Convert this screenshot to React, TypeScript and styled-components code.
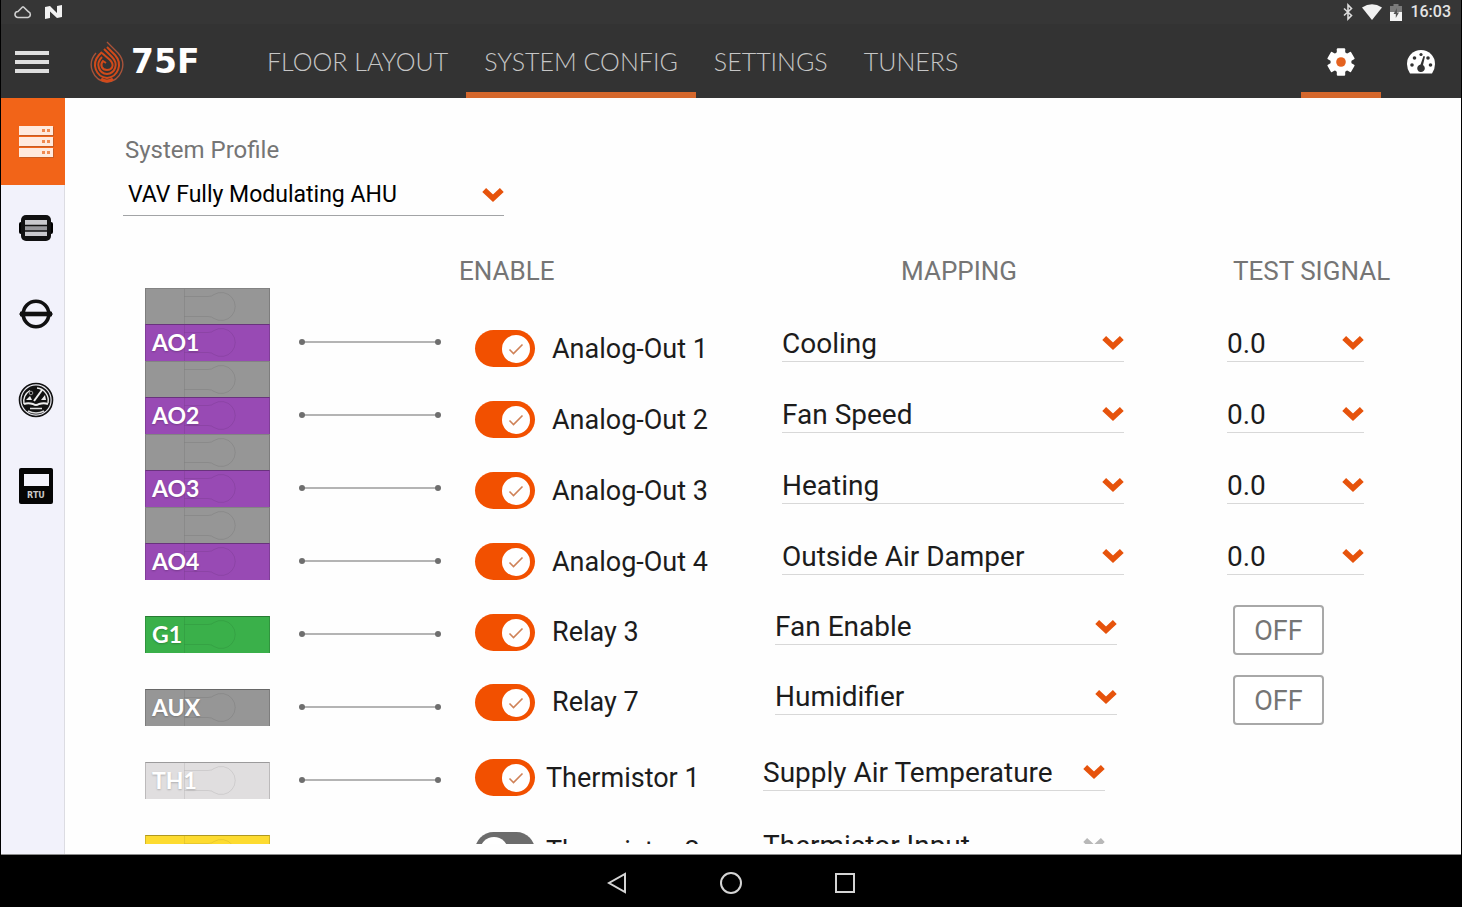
import React, { useState } from "react";
import styled, { createGlobalStyle, css } from "styled-components";

const colors = {
  bar: "#333333",
  accent: "#f26418",
  toggle: "#f25000",
  chevron: "#e6530c",
  rail: "#f2f2fb",
  muted: "#757575",
  ink: "#1c1c1c",
};

const GlobalStyle = createGlobalStyle`
  *, *::before, *::after { box-sizing: border-box; }
  body { margin: 0; background: #000; }
  button, select, input { font: inherit; color: inherit; margin: 0; }
`;

const Screen = styled.div`
  display: flex;
  flex-direction: column;
  height: 100vh;
  padding: 0 1px;
  background: #000;
  color: ${colors.ink};
  font-family: Roboto, "Liberation Sans", sans-serif;
`;

/* ---------- status bar ---------- */

const StatusBar = styled.div`
  display: flex;
  align-items: center;
  justify-content: space-between;
  height: 24px;
  padding: 0 10px 0 13px;
  background: #363636;
  color: #e4e4e4;
`;

const StatusGroup = styled.div<{ $gap: number }>`
  display: flex;
  align-items: center;
  gap: ${(p) => p.$gap}px;
`;

const Clock = styled.time`
  font-size: 16px;
  line-height: 24px;
  font-weight: 500;
`;

/* ---------- app bar ---------- */

const AppBar = styled.header`
  display: flex;
  align-items: stretch;
  height: 74px;
  flex: none;
  background: ${colors.bar};
`;

const MenuButton = styled.button`
  display: flex;
  align-items: center;
  width: 88px;
  padding: 2px 0 0 14px;
  border: 0;
  background: none;
  cursor: pointer;
`;

const Brand = styled.a`
  display: flex;
  align-items: center;
  gap: 6px;
  width: 160px;
  padding-top: 2px;
  color: #fff;
  font-family: "DejaVu Sans", sans-serif;
  font-size: 33px;
  line-height: 36px;
  font-weight: 700;
  text-decoration: none;
`;

const Tabs = styled.nav`
  display: flex;
  flex: 1;
`;

const Tab = styled.a<{ $active?: boolean }>`
  display: flex;
  align-items: center;
  padding: 12px 18px 6px;
  border-bottom: 6px solid ${(p) => (p.$active ? "#d4672c" : "transparent")};
  color: #c6c6c6;
  font-family: Lato, "Open Sans", sans-serif;
  font-size: 25px;
  line-height: 32px;
  font-weight: 300;
  text-decoration: none;
  white-space: nowrap;
`;

const IconTab = styled.button<{ $active?: boolean }>`
  display: flex;
  align-items: center;
  justify-content: center;
  width: 80px;
  padding: 14px 0 6px;
  border: 0;
  border-bottom: 6px solid ${(p) => (p.$active ? "#d4672c" : "transparent")};
  background: none;
  cursor: pointer;
`;

/* ---------- main area ---------- */

const Main = styled.div`
  display: flex;
  flex: 1;
  min-height: 0;
  background: #fefefe;
  border-bottom: 1px solid #8c8c8c;
`;

const Rail = styled.nav`
  width: 64px;
  flex: none;
  background: ${colors.rail};
  border-right: 1px solid #dcdce2;
`;

const RailButton = styled.button<{ $active?: boolean }>`
  display: flex;
  align-items: center;
  justify-content: center;
  width: 64px;
  height: ${(p) => (p.$active ? 87 : 86)}px;
  padding: 0 0 0 6px;
  border: 0;
  background: ${(p) => (p.$active ? colors.accent : "transparent")};
  cursor: pointer;
`;

const Content = styled.main`
  flex: 1;
  min-width: 0;
  margin-bottom: 10px;
  padding: 36px 0 0 58px;
  overflow: hidden;
`;

const ProfileField = styled.div`
  width: 381px;
`;

const ProfileLabel = styled.label`
  display: block;
  padding-left: 2px;
  color: ${colors.muted};
  font-size: 24px;
  line-height: 32px;
`;

const SelectBox = styled.div<{ $width?: number; $profile?: boolean }>`
  position: relative;
  width: ${(p) => (p.$width ? `${p.$width}px` : "100%")};
  height: 36px;
  border-bottom: 1px solid #d8d8d8;
  font-size: 28px;
  ${(p) =>
    p.$profile
      ? css`
          height: 42px;
          margin-top: 8px;
          padding-left: 5px;
          border-bottom-color: #a2a4a6;
          color: #000;
          font-size: 23px;
        `
      : css`
          margin-bottom: 10px;
        `}
`;

const NativeSelect = styled.select`
  appearance: none;
  display: block;
  width: 100%;
  height: 100%;
  padding: 0 32px 0 0;
  border: 0;
  border-radius: 0;
  background: none;
  cursor: pointer;
`;

const ChevronSlot = styled.span`
  position: absolute;
  top: 0;
  right: 0;
  bottom: 0;
  display: flex;
  align-items: center;
  pointer-events: none;
`;

const Board = styled.div`
  display: flex;
  align-items: flex-start;
  margin-top: 36px;
  padding-left: 22px;
`;

/* ---------- terminals ---------- */

const Terminals = styled.div`
  width: 314px;
  flex: none;
  padding-top: 36px;
`;

const TerminalRow = styled.div`
  display: flex;
  align-items: center;
  gap: 28px;
  height: 37px;
`;

const Tile = styled.div<{ $color: string; $spacer?: boolean }>`
  position: relative;
  display: flex;
  align-items: center;
  width: 125px;
  height: ${(p) => (p.$spacer ? 36 : 37)}px;
  padding: 0 0 2px 6px;
  border: solid rgba(0, 0, 0, 0.16);
  border-width: 1px 1px 0 1px;
  border-top-color: rgba(0, 0, 0, ${(p) => (p.$spacer ? 0.12 : 0.3)});
  background: ${(p) => p.$color};
  color: #fff;
  font-family: Lato, "Open Sans", sans-serif;
  font-size: 23px;
  line-height: 32px;
  font-weight: 700;
  text-shadow: 0 1px 2px rgba(0, 0, 0, 0.22);
`;

const Slot = styled.svg`
  position: absolute;
  inset: 0;
`;

const TileName = styled.span`
  position: relative;
`;

const Gap = styled.div`
  height: 36px;
`;

/* ---------- rows ---------- */

const Points = styled.div`
  flex: 1;
  min-width: 700px;
`;

const Heads = styled.div`
  display: grid;
  grid-template-columns: minmax(0, 1fr) 332px 160px;
  padding: 2px 68px 0 0;
  margin-bottom: 25px;
  color: ${colors.muted};
  font-size: 26px;
  line-height: 34px;
  white-space: nowrap;
`;

type Kind = "analog" | "relay" | "thermistor";

const signalWidth: Record<Kind, number> = { analog: 240, relay: 247, thermistor: 259 };
const rowHeight: Record<Kind, number> = { analog: 71, relay: 70, thermistor: 73 };

const PointRow = styled.div<{ $kind: Kind }>`
  display: grid;
  grid-template-columns: minmax(0, 1fr) 342px ${(p) => signalWidth[p.$kind]}px;
  align-items: center;
  height: ${(p) => rowHeight[p.$kind]}px;
  padding: 0 97px 0 16px;
`;

const ThermistorGroup = styled.div`
  padding-top: 4px;
`;

const ToggleLabel = styled.label<{ $kind: Kind }>`
  display: flex;
  align-items: center;
  gap: ${(p) => (p.$kind === "thermistor" ? 11 : 17)}px;
  font-size: 27px;
  line-height: 36px;
  white-space: nowrap;
  cursor: pointer;
`;

const Switch = styled.span`
  position: relative;
  display: flex;
  width: 60px;
  height: 37px;
`;

const SwitchInput = styled.input`
  appearance: none;
  width: 60px;
  height: 37px;
  border-radius: 19px;
  background: #6c6c6c;
  cursor: pointer;
  &:checked {
    background: ${colors.toggle};
  }
`;

const Knob = styled.span<{ $on: boolean }>`
  position: absolute;
  top: 5px;
  left: ${(p) => (p.$on ? 27 : 5)}px;
  display: flex;
  align-items: center;
  justify-content: center;
  width: 28px;
  height: 28px;
  border-radius: 50%;
  background: #fff;
  pointer-events: none;
`;

const Signal = styled.div`
  justify-self: end;
`;

const OffButton = styled.button`
  display: block;
  width: 91px;
  height: 50px;
  margin: 0 40px 4px 0;
  padding: 2px 0 0;
  border: 2px solid #a8a8a8;
  border-radius: 4px;
  background: #fff;
  color: ${colors.muted};
  font-size: 27px;
  line-height: 32px;
  cursor: pointer;
`;

/* ---------- system navigation ---------- */

const NavBar = styled.footer`
  display: flex;
  align-items: center;
  justify-content: center;
  gap: 64px;
  flex: none;
  height: 52px;
  padding-top: 3px;
  background: #000;
`;

const NavButton = styled.button`
  display: flex;
  align-items: center;
  justify-content: center;
  width: 50px;
  height: 48px;
  padding: 0;
  border: 0;
  background: none;
  cursor: pointer;
`;

/* ---------- drawings ---------- */

const Chevron = ({ color = colors.chevron }: { color?: string }) => (
  <svg width="22" height="22" viewBox="0 0 22 22" fill="none" aria-hidden="true">
    <path d="M2.200 6 L11 14.200 L19.800 6" stroke={color} strokeWidth="5.600" />
  </svg>
);

const FlameLogo = () => (
  <svg width="36" height="44" viewBox="0 0 36 44" fill="none" stroke="#d24a1a" aria-hidden="true">
    <path d="M18 2 L29 13 C39 24 32 41 18 42 C4 41 -3 24 7 13" stroke="#a8533a" strokeWidth="1.4" />
    <path d="M18 7 L26 15 C34 24 29 37 18 38 C7 37 2 24 10 15 L13 12" strokeWidth="2" />
    <path d="M15 9 L23 17 C30 24 26 33.500 18 34 C10 33.500 6 24 13 17" strokeWidth="2" />
    <path d="M13 13 L21 20 C26 25 23 30 18 30 C13 30 10.500 25 14 21 L17 23" strokeWidth="2" />
    <path d="M12 39 Q18 43 24 39" strokeWidth="3" />
  </svg>
);

const GearIcon = () => (
  <svg width="28" height="28" viewBox="0 0 28 28" aria-hidden="true">
    <circle cx="14" cy="14" r="10.500" fill="#fff" />
    {[0, 60, 120, 180, 240, 300].map((a) => (
      <rect key={a} x="9.800" y="0.300" width="8.400" height="8" rx="1" fill="#fff" transform={`rotate(${a} 14 14)`} />
    ))}
    <circle cx="14" cy="14" r="4.800" fill="#e4621f" />
  </svg>
);

const GaugeIcon = () => (
  <svg width="28" height="24" viewBox="0 0 28 24" aria-hidden="true">
    <path d="M3 23.500 Q0 19 0 14 A14 14 0 0 1 28 14 Q28 19 25 23.500 Z" fill="#fff" />
    <g fill={colors.bar}>
      <circle cx="5" cy="15" r="1.800" />
      <circle cx="7.500" cy="8" r="1.800" />
      <circle cx="14" cy="4.500" r="1.600" />
      <circle cx="21" cy="8" r="1.800" />
      <circle cx="23.500" cy="15" r="1.800" />
      <path d="M16.500 6 L18 6.500 L16 15 A3.800 3.800 0 1 1 13.500 14.500 Z" />
    </g>
  </svg>
);

const ServerIcon = () => (
  <svg width="35" height="32" viewBox="0 0 35 32" aria-hidden="true">
    {[0, 11, 22].map((y) => (
      <g key={y}>
        <rect x="1" y={y + 1} width="34" height="9" fill="#a8562c" opacity="0.6" />
        <rect x="0" y={y} width="34" height="9" fill="#ffeadd" />
        <rect x="23" y={y + 3} width="3" height="3" fill="#f08a50" />
        <rect x="28" y={y + 3} width="3" height="3" fill="#f08a50" />
      </g>
    ))}
  </svg>
);

const ModuleIcon = () => (
  <svg width="34" height="26" viewBox="0 0 34 26" aria-hidden="true">
    <rect x="0" y="7" width="34" height="12" rx="2" fill="#000" />
    <rect x="2" y="0" width="30" height="26" rx="5" fill="#111" />
    <rect x="6" y="5" width="22" height="16" fill="#c9c9cd" />
    <rect x="6" y="11" width="22" height="5" fill="#98989c" />
    <path d="M6 10.500 H28 M6 16 H28" stroke="#111" strokeWidth="1.600" />
  </svg>
);

const DuctIcon = () => (
  <svg width="34" height="30" viewBox="0 0 34 30" fill="none" stroke="#111" aria-hidden="true">
    <circle cx="17" cy="15" r="12.800" strokeWidth="3.600" />
    <path d="M1 15 H33" strokeWidth="4.600" />
    <path d="M5 10 L0 15 L5 20 Z M29 10 L34 15 L29 20 Z" fill="#111" stroke="none" />
  </svg>
);

const DialIcon = () => (
  <svg width="36" height="36" viewBox="0 0 36 36" fill="none" aria-hidden="true">
    <circle cx="18" cy="18" r="16.500" stroke="#111" strokeWidth="1.600" fill="#e9e9f0" />
    <circle cx="18" cy="18" r="14.500" fill="#111" />
    <path d="M6 22 A12.500 12.500 0 0 1 12 8.500 M19 6 A12.500 12.500 0 0 1 30 21" stroke="#eee" strokeWidth="1.400" />
    <path d="M6 22 Q10 20.500 15 22 Q18 24 21 22 Q26 20.500 30 22" stroke="#eee" strokeWidth="2" />
    <path d="M24 8 L16 19" stroke="#eee" strokeWidth="2" />
    <path d="M8 18 L12 14 L14 18 Z M23 18 L27 13 L28 18 Z" fill="#eee" />
    <circle cx="13" cy="11" r="1.800" stroke="#999" strokeWidth="1" />
    <path d="M12 26.500 H24 M10 29 Q18 33 26 29" stroke="#ddd" strokeWidth="1.400" />
  </svg>
);

const RtuIcon = () => (
  <svg width="34" height="36" viewBox="0 0 34 36" aria-hidden="true">
    <rect width="34" height="36" rx="2" fill="#050505" />
    <rect x="5" y="6" width="25" height="12" fill="#f2f2fb" />
    <text x="17" y="30" textAnchor="middle" fontFamily="DejaVu Sans, sans-serif" fontWeight="700" fontSize="8" fill="#c8c8c8">
      RTU
    </text>
  </svg>
);

const CloudIcon = () => (
  <svg width="18" height="14" viewBox="0 0 18 14" fill="none" stroke="#d0d0d0" strokeWidth="1.600" aria-hidden="true">
    <path d="M4 12.500 H14 A3 3 0 0 0 14.500 6.800 L9.500 2 L8.500 2 L4 6.500 A3 3 0 0 0 4 12.500 Z" />
  </svg>
);

const NougatIcon = () => (
  <svg width="17" height="14" viewBox="0 0 17 14" aria-hidden="true">
    <path d="M0 2 L5 1 L12 8 L12 1 L17 0 V12 L12 13 L5 6.500 V13 L0 14 Z" fill="#f2f2f2" />
  </svg>
);

const BluetoothIcon = () => (
  <svg width="12" height="18" viewBox="0 0 12 18" fill="none" stroke="#dcdcdc" strokeWidth="1.600" aria-hidden="true">
    <path d="M2 5.500 L9.500 12.500 L6 16 V2 L9.500 5.500 L2 12.500" />
  </svg>
);

const WifiIcon = () => (
  <svg width="20" height="16" viewBox="0 0 20 16" aria-hidden="true">
    <path d="M0 3.500 Q10 -3 20 3.500 L10 16 Z" fill="#f2f2f2" />
  </svg>
);

const BatteryIcon = () => (
  <svg width="12" height="17" viewBox="0 0 12 17" aria-hidden="true">
    <path d="M3.500 0 H8.500 V2 H12 V17 H0 V2 H3.500 Z" fill="#7a7a7a" />
    <path d="M0 8 H12 V17 H0 Z" fill="#f4f4f4" />
    <path d="M7 4 L3.500 10 H5.800 V14 L9 8.500 H7 Z" fill="#555" />
  </svg>
);

const MenuIcon = () => (
  <svg width="34" height="24" viewBox="0 0 34 24" aria-hidden="true">
    <path d="M0 3 H34 M0 12 H34 M0 21 H34" stroke="#dedede" strokeWidth="4" />
  </svg>
);

const Wire = () => (
  <svg width="144" height="8" viewBox="0 0 144 8" aria-hidden="true">
    <path d="M4 3 H140" stroke="#b4b4b4" strokeWidth="2" />
    <circle cx="4" cy="3" r="3" fill="#6e6e6e" />
    <circle cx="140" cy="3" r="3" fill="#6e6e6e" />
  </svg>
);

const TileSlot = () => (
  <Slot width="124" height="36" viewBox="0 0 124 36" fill="none" stroke="rgba(0,0,0,0.08)" aria-hidden="true">
    <path d="M38.500 0 V36 M38.500 7.500 H62 Q66 7.500 68 5.500 A14 14 0 1 1 68 29.500 Q66 27.500 62 27.500 H38.500" />
  </Slot>
);

/* ---------- data ---------- */

interface Terminal {
  name: string;
  color: string;
  spacer?: boolean;
  wired?: boolean;
}

const purple = "#984ab4";
const grey = "#969696";

const terminals: Terminal[] = [
  { name: "AO1", color: purple, spacer: true, wired: true },
  { name: "AO2", color: purple, spacer: true, wired: true },
  { name: "AO3", color: purple, spacer: true, wired: true },
  { name: "AO4", color: purple, spacer: true, wired: true },
  { name: "G1", color: "#3ab04a", wired: true },
  { name: "AUX", color: grey, wired: true },
  { name: "TH1", color: "#e0dedf", wired: true },
  { name: "TH2", color: "#fddb30" },
];

interface Point {
  kind: Kind;
  name: string;
  mapping: string;
  enabled: boolean;
}

const points: Point[] = [
  { kind: "analog", name: "Analog-Out 1", mapping: "Cooling", enabled: true },
  { kind: "analog", name: "Analog-Out 2", mapping: "Fan Speed", enabled: true },
  { kind: "analog", name: "Analog-Out 3", mapping: "Heating", enabled: true },
  { kind: "analog", name: "Analog-Out 4", mapping: "Outside Air Damper", enabled: true },
  { kind: "relay", name: "Relay 3", mapping: "Fan Enable", enabled: true },
  { kind: "relay", name: "Relay 7", mapping: "Humidifier", enabled: true },
  { kind: "thermistor", name: "Thermistor 1", mapping: "Supply Air Temperature", enabled: true },
  { kind: "thermistor", name: "Thermistor 2", mapping: "Thermistor Input", enabled: false },
];

/* ---------- parts ---------- */

const PointLine = ({ point }: { point: Point }) => {
  const [on, setOn] = useState(point.enabled);
  return (
    <PointRow $kind={point.kind}>
      <ToggleLabel $kind={point.kind}>
        <Switch>
          <SwitchInput type="checkbox" checked={on} onChange={(e) => setOn(e.target.checked)} />
          <Knob $on={on}>
            {on && (
              <svg width="16" height="14" viewBox="0 0 16 14" fill="none" aria-hidden="true">
                <path d="M1.500 7.500 L5.500 11.500 L14.500 2.500" stroke="#cf8258" strokeWidth="1.600" />
              </svg>
            )}
          </Knob>
        </Switch>
        {point.name}
      </ToggleLabel>
      <SelectBox $width={342}>
        <NativeSelect aria-label={`${point.name} mapping`} defaultValue={point.mapping}>
          <option>{point.mapping}</option>
        </NativeSelect>
        <ChevronSlot>
          <Chevron color={on ? colors.chevron : "#b8b8b8"} />
        </ChevronSlot>
      </SelectBox>
      <Signal>
        {point.kind === "analog" && (
          <SelectBox $width={137}>
            <NativeSelect aria-label={`${point.name} test signal`} defaultValue="0.0">
              <option>0.0</option>
            </NativeSelect>
            <ChevronSlot>
              <Chevron />
            </ChevronSlot>
          </SelectBox>
        )}
        {point.kind === "relay" && <OffButton type="button">OFF</OffButton>}
      </Signal>
    </PointRow>
  );
};

export default function App() {
  const ports = points.filter((p) => p.kind !== "thermistor");
  const sensors = points.filter((p) => p.kind === "thermistor");
  return (
    <>
      <GlobalStyle />
      <Screen>
        <StatusBar>
          <StatusGroup $gap={13}>
            <CloudIcon />
            <NougatIcon />
          </StatusGroup>
          <StatusGroup $gap={8}>
            <BluetoothIcon />
            <WifiIcon />
            <BatteryIcon />
            <Clock>16:03</Clock>
          </StatusGroup>
        </StatusBar>

        <AppBar>
          <MenuButton type="button" aria-label="Menu">
            <MenuIcon />
          </MenuButton>
          <Brand href="#home">
            <FlameLogo />
            75F
          </Brand>
          <Tabs>
            <Tab href="#floor">FLOOR LAYOUT</Tab>
            <Tab href="#system" $active>
              SYSTEM CONFIG
            </Tab>
            <Tab href="#settings">SETTINGS</Tab>
            <Tab href="#tuners">TUNERS</Tab>
          </Tabs>
          <IconTab type="button" $active aria-label="Configuration">
            <GearIcon />
          </IconTab>
          <IconTab type="button" aria-label="Dashboard">
            <GaugeIcon />
          </IconTab>
        </AppBar>

        <Main>
          <Rail>
            <RailButton type="button" $active aria-label="System">
              <ServerIcon />
            </RailButton>
            <RailButton type="button" aria-label="Module">
              <ModuleIcon />
            </RailButton>
            <RailButton type="button" aria-label="Damper">
              <DuctIcon />
            </RailButton>
            <RailButton type="button" aria-label="Meter">
              <DialIcon />
            </RailButton>
            <RailButton type="button" aria-label="Rooftop unit">
              <RtuIcon />
            </RailButton>
          </Rail>

          <Content>
            <ProfileField>
              <ProfileLabel htmlFor="profile">System Profile</ProfileLabel>
              <SelectBox $profile>
                <NativeSelect id="profile" defaultValue="VAV Fully Modulating AHU">
                  <option>VAV Fully Modulating AHU</option>
                </NativeSelect>
                <ChevronSlot>
                  <Chevron />
                </ChevronSlot>
              </SelectBox>
            </ProfileField>

            <Board>
              <Terminals>
                {terminals.map((t) => (
                  <React.Fragment key={t.name}>
                    {t.spacer ? (
                      <Tile $color={grey} $spacer>
                        <TileSlot />
                      </Tile>
                    ) : (
                      <Gap />
                    )}
                    <TerminalRow>
                      <Tile $color={t.color}>
                        <TileSlot />
                        <TileName>{t.name}</TileName>
                      </Tile>
                      {t.wired && <Wire />}
                    </TerminalRow>
                  </React.Fragment>
                ))}
              </Terminals>

              <Points>
                <Heads>
                  <span>ENABLE</span>
                  <span>MAPPING</span>
                  <span>TEST SIGNAL</span>
                </Heads>
                {ports.map((p) => (
                  <PointLine key={p.name} point={p} />
                ))}
                <ThermistorGroup>
                  {sensors.map((p) => (
                    <PointLine key={p.name} point={p} />
                  ))}
                </ThermistorGroup>
              </Points>
            </Board>
          </Content>
        </Main>

        <NavBar>
          <NavButton type="button" aria-label="Back">
            <svg width="20" height="22" viewBox="0 0 20 22" fill="none" stroke="#d4d4d4" strokeWidth="2" aria-hidden="true">
              <path d="M18 2 V20 L2 11 Z" />
            </svg>
          </NavButton>
          <NavButton type="button" aria-label="Home">
            <svg width="24" height="24" viewBox="0 0 24 24" fill="none" stroke="#d4d4d4" strokeWidth="2" aria-hidden="true">
              <circle cx="12" cy="12" r="10" />
            </svg>
          </NavButton>
          <NavButton type="button" aria-label="Recent apps">
            <svg width="20" height="20" viewBox="0 0 20 20" fill="none" stroke="#d4d4d4" strokeWidth="2" aria-hidden="true">
              <rect x="1" y="1" width="18" height="18" />
            </svg>
          </NavButton>
        </NavBar>
      </Screen>
    </>
  );
}
